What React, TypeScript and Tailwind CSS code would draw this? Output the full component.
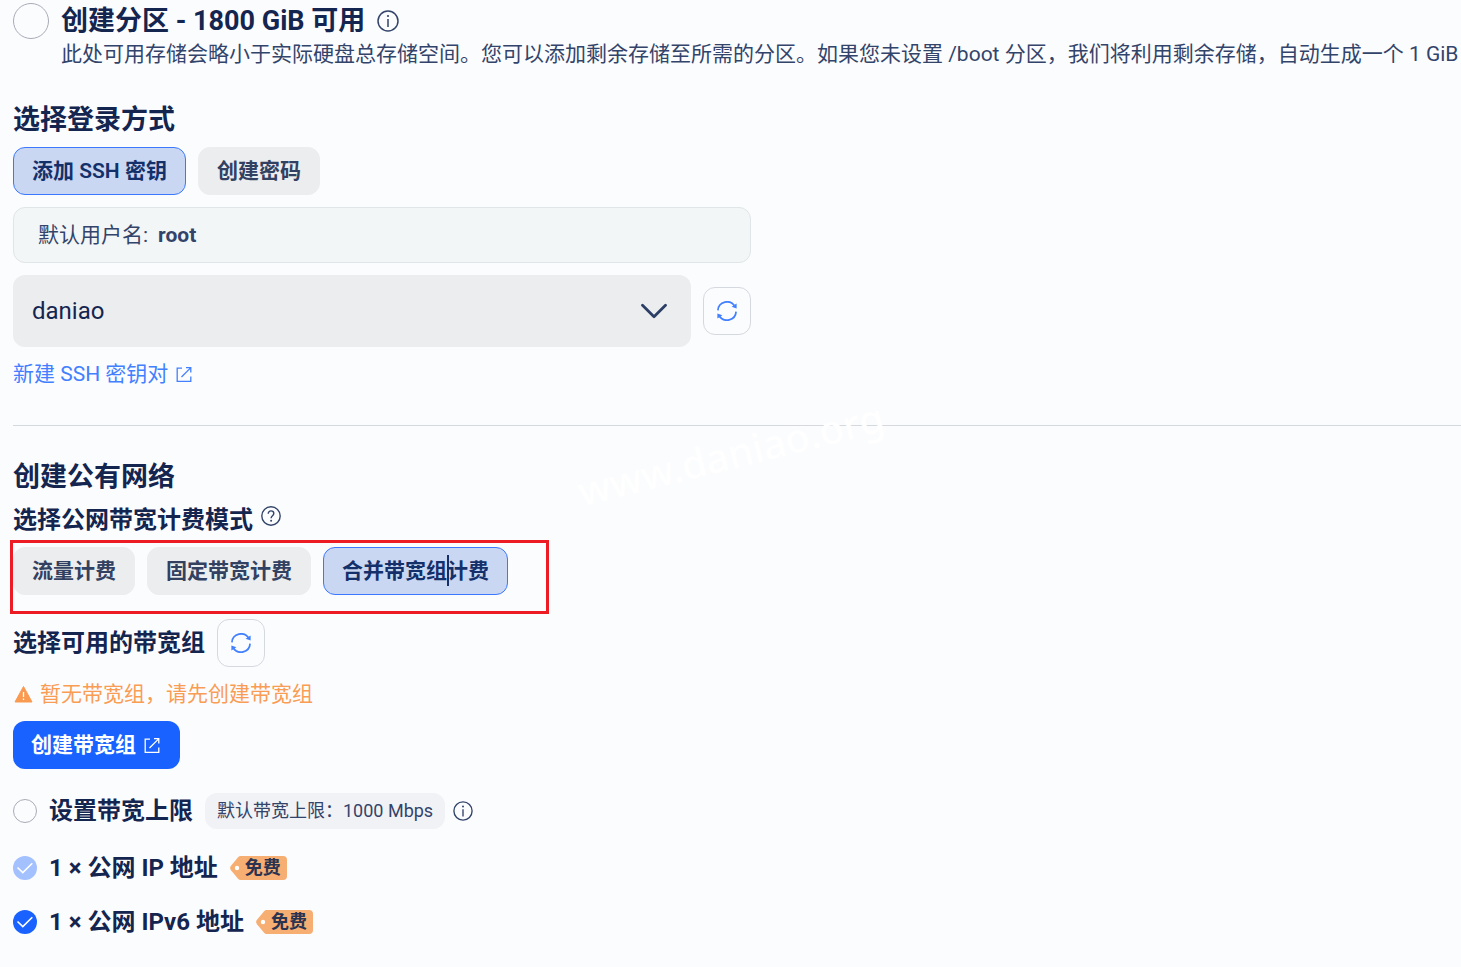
import type { ReactNode } from 'react';
import clsx from 'clsx';

interface TabButtonProps {
  active?: boolean;
  children: ReactNode;
}

interface CheckRowProps {
  id: string;
  label: string;
  disabled?: boolean;
}

function TabButton({ active, children }: TabButtonProps) {
  return (
    <button
      type="button"
      className={clsx(
        'relative h-12 rounded-xl border px-[18px] text-[21px] leading-8 font-semibold whitespace-nowrap',
        active
          ? 'border-[#3b78ff] bg-[#cad7f2] text-[#14306b]'
          : 'border-[#ecedef] bg-[#ecedef] text-[#324161]'
      )}
    >
      {children}
    </button>
  );
}

function InfoIcon({ className }: { className: string }) {
  return (
    <svg className={className} viewBox="0 0 22 22" fill="none" stroke="currentColor" strokeWidth="1.5">
      <circle cx="11" cy="11" r="10" />
      <path d="M11 9v8" />
      <circle cx="11" cy="6" r="1.1" fill="currentColor" stroke="none" />
    </svg>
  );
}

function HelpIcon() {
  return (
    <svg className="size-5 text-[#33446a]" viewBox="0 0 20 20" fill="none" stroke="currentColor" strokeWidth="1.4">
      <circle cx="10" cy="10" r="9.2" />
      <path d="M7.2 7.8c0-1.8 1.2-2.9 2.8-2.9s2.8 1 2.8 2.6c0 2.2-2.7 2.3-2.7 4.7" />
      <circle cx="10.1" cy="14.8" r="1" fill="currentColor" stroke="none" />
    </svg>
  );
}

function ExternalIcon() {
  return (
    <svg className="size-4" viewBox="0 0 16 16" fill="none" stroke="currentColor" strokeWidth="1.3">
      <path d="M6 2.2H1.2v13.1h13.6V10.5" />
      <path d="M5.5 11L14.6 1.9M10 1.7h4.8V6.5" />
    </svg>
  );
}

function RefreshButton() {
  return (
    <button
      type="button"
      aria-label="刷新"
      className="flex size-12 shrink-0 items-center justify-center rounded-xl border border-[#d6d8df] text-[#4280ff]"
    >
      <svg className="size-5" viewBox="0 0 20 20" fill="none" stroke="currentColor" strokeWidth="1.7">
        <path d="M.9 9.4A9.1 9.1 0 0 1 17.8 5.3" />
        <path d="M19.1 10.6A9.1 9.1 0 0 1 2.2 14.7" />
        <path d="M19.6 2.6v4.9l-5-1.8z" fill="currentColor" stroke="none" />
        <path d="M.4 17.4v-4.9l5 1.8z" fill="currentColor" stroke="none" />
      </svg>
    </button>
  );
}

function FreeTag() {
  return (
    <span className="relative flex h-6 w-[57px] items-center justify-end pr-[6px] text-[18px] leading-6 font-bold text-[#2a3350]">
      <svg className="absolute inset-0 size-full" viewBox="0 0 57 24">
        <path
          d="M10.5 0H53a4 4 0 0 1 4 4v16a4 4 0 0 1-4 4H10.5a3 3 0 0 1-2.2-1L1 14.2a3.5 3.5 0 0 1 0-4.4L8.3 1a3 3 0 0 1 2.2-1z"
          fill="#f7ae72"
        />
        <circle cx="7" cy="12" r="2.2" fill="#fff" />
      </svg>
      <span className="relative">免费</span>
    </span>
  );
}

function CheckRow({ id, label, disabled }: CheckRowProps) {
  return (
    <div className="flex h-9 items-center gap-3">
      <span className="relative flex size-6">
        <input
          id={id}
          type="checkbox"
          defaultChecked
          disabled={disabled}
          className="size-6 appearance-none rounded-full bg-[#1962ff] disabled:bg-[#a3c0ff]"
        />
        <svg
          className="pointer-events-none absolute inset-0 size-6"
          viewBox="0 0 24 24"
          fill="none"
          stroke="#fff"
          strokeWidth="1.6"
        >
          <path d="M4.5 11.5L9.8 16.6L19.3 7.2" />
        </svg>
      </span>
      <label htmlFor={id} className="text-2xl leading-9 font-bold">
        {label}
      </label>
      <FreeTag />
    </div>
  );
}

export default function App() {
  return (
    <main className="relative min-h-screen overflow-hidden bg-[#fbfcfe] pt-[3px] pb-7 pl-[13px] font-['Roboto','Noto_Sans_CJK_SC',sans-serif] text-[#14254f]">
      <section>
        <div className="flex items-start gap-3">
          <input
            id="partition"
            type="radio"
            name="partition"
            className="size-9 shrink-0 appearance-none rounded-full border border-[#a9abb8]"
          />
          <div>
            <div className="flex items-center gap-3">
              <label htmlFor="partition" className="text-[27px] leading-9 font-bold">
                创建分区 - 1800 GiB 可用
              </label>
              <InfoIcon className="size-[22px] text-[#33446a]" />
            </div>
            <p className="text-[21px] leading-[30px] whitespace-nowrap text-[#33446a]">
              此处可用存储会略小于实际硬盘总存储空间。您可以添加剩余存储至所需的分区。如果您未设置 /boot 分区，我们将利用剩余存储，自动生成一个 1 GiB
            </p>
          </div>
        </div>

        <h2 className="mt-8 text-[27px] leading-[38px] font-bold">选择登录方式</h2>
        <div className="mt-2 flex gap-3">
          <TabButton active>添加 SSH 密钥</TabButton>
          <TabButton>创建密码</TabButton>
        </div>

        <div className="mt-3 max-w-[738px]">
          <div className="flex h-14 items-center gap-[10px] rounded-xl border border-[#e0e5e8] bg-[#f3f6f7] px-6 text-[21px] leading-[30px] text-[#33446a]">
            <span>默认用户名:</span>
            <strong className="font-bold">root</strong>
          </div>
          <div className="mt-3 flex items-center gap-3">
            <div className="relative flex-1">
              <select
                aria-label="SSH 密钥"
                className="h-[72px] w-full appearance-none rounded-xl bg-[#ecedef] px-[19px] text-2xl"
              >
                <option>daniao</option>
              </select>
              <svg
                className="pointer-events-none absolute top-7 right-6 h-4 w-[26px]"
                viewBox="0 0 26 16"
                fill="none"
                stroke="#2b3f66"
                strokeWidth="2.8"
                strokeLinecap="round"
                strokeLinejoin="round"
              >
                <path d="M1.5 2.3L13 13.8L24.5 2.3" />
              </svg>
            </div>
            <RefreshButton />
          </div>
        </div>

        <a href="#ssh" className="mt-3 inline-flex items-center gap-2 text-[21px] leading-[30px] text-[#4280ff]">
          新建 SSH 密钥对
          <ExternalIcon />
        </a>
      </section>

      <hr className="mt-9 border-[#d6d8df]" />

      <section className="mt-8">
        <h2 className="text-[27px] leading-[38px] font-bold">创建公有网络</h2>
        <div className="mt-[6px] flex items-start gap-2">
          <h3 className="text-2xl leading-9 font-bold">选择公网带宽计费模式</h3>
          <span className="pt-1">
            <HelpIcon />
          </span>
        </div>
        <div className="relative mt-[9px] flex gap-3">
          <TabButton>流量计费</TabButton>
          <TabButton>固定带宽计费</TabButton>
          <TabButton active>
            合并带宽组
            <span className="absolute top-[7px] h-[31px] w-0.5 bg-[#14306b]" />
            计费
          </TabButton>
          <div className="pointer-events-none absolute -top-[7px] -left-[3px] h-[74px] w-[539px] border-3 border-[#ed1c24]" />
        </div>

        <div className="mt-6 flex items-center gap-3">
          <h3 className="text-2xl leading-9 font-bold">选择可用的带宽组</h3>
          <RefreshButton />
        </div>

        <p className="mt-3 flex items-center gap-[6px] text-[21px] leading-[30px] text-[#f99d55]">
          <svg className="h-5 w-[21px]" viewBox="0 0 21 20">
            <path d="M10.5 2.5L19 18H2z" fill="#f99a50" stroke="#f99a50" strokeLinejoin="round" />
            <path d="M10.5 8v5M10.5 14.5v1.6" stroke="#fff" strokeWidth="1.3" />
          </svg>
          暂无带宽组，请先创建带宽组
        </p>
        <button
          type="button"
          className="mt-3 flex h-12 items-center gap-2 rounded-xl bg-[#1962ff] pr-5 pl-[18px] text-[21px] leading-8 font-bold text-white"
        >
          创建带宽组
          <ExternalIcon />
        </button>

        <div className="mt-6 flex h-9 items-center gap-3">
          <input
            id="limit"
            type="radio"
            name="limit"
            className="size-6 appearance-none rounded-full border border-[#a9abb8]"
          />
          <label htmlFor="limit" className="text-2xl leading-9 font-bold">
            设置带宽上限
          </label>
          <span className="h-9 rounded-xl bg-[#f1f2f6] px-3 text-[18px] leading-9 text-[#33446a]">
            默认带宽上限：1000 Mbps
          </span>
          <span className="-ml-1">
            <InfoIcon className="size-5 text-[#33446a]" />
          </span>
        </div>

        <div className="mt-[21px] flex flex-col gap-[18px]">
          <CheckRow id="ipv4" label="1 × 公网 IP 地址" disabled />
          <CheckRow id="ipv6" label="1 × 公网 IPv6 地址" />
        </div>
      </section>

      <span className="pointer-events-none absolute top-[424px] left-[574px] -rotate-[14deg] font-['Noto_Sans',sans-serif] text-[40px] leading-[60px] font-medium text-white">
        www.daniao.org
      </span>
    </main>
  );
}
